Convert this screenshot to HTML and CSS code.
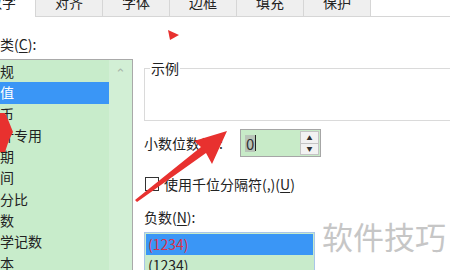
FILE: index.html
```html
<!DOCTYPE html>
<html lang="zh-CN">

<head>
    <meta charset="UTF-8">
    <meta name="viewport" content="width=device-width, initial-scale=1.0">
    <title>设置单元格格式-数字</title>
    <link rel="stylesheet" href="styles.css">
</head>

<body>
    <!--tab strip-->
    <div class="tabs">
        <div class="tab active">数字</div>
        <div class="tab">对齐</div>
        <div class="tab">字体</div>
        <div class="tab">边框</div>
        <div class="tab">填充</div>
        <div class="tab">保护</div>
    </div>

    <div class="main">
        <!--category list-->
        <div class="left">
            <div class="label">分类(<u>C</u>):</div>
            <div class="cat-box">
                <ul class="cat-list">
                    <li>常规</li>
                    <li class="selected">数值</li>
                    <li>货币</li>
                    <li>会计专用</li>
                    <li>日期</li>
                    <li>时间</li>
                    <li>百分比</li>
                    <li>分数</li>
                    <li>科学记数</li>
                    <li>文本</li>
                </ul>
                <div class="scroll"><span class="up">&#8963;</span></div>
            </div>
        </div>

        <!--options-->
        <div class="right">
            <fieldset class="sample">
                <legend>示例</legend>
                <div class="sample-body"></div>
            </fieldset>

            <div class="decimal-row">
                <span class="decimal-label">小数位数(<u>D</u>):</span>
                <div class="spin">
                    <div class="spin-value"><span class="sel">0</span><span class="caret"></span></div>
                    <div class="spin-btns">
                        <span>&#9650;</span>
                        <span>&#9660;</span>
                    </div>
                </div>
            </div>

            <label class="check-row">
                <span class="check"></span>使用千位分隔符(,)(<u>U</u>)
            </label>

            <div class="label neg-label">负数(<u>N</u>):</div>
            <ul class="neg-list">
                <li class="selected">(1234)</li>
                <li>(1234)</li>
            </ul>
        </div>
    </div>

    <!--watermark-->
    <div class="watermark">软件技巧</div>

    <!--red marks drawn over the screenshot-->
    <svg class="marks" width="450" height="270" viewBox="0 0 450 270">
        <polygon points="168,30 179,35 170,40" />
        <polygon points="0,113 5,113 9,122 13,132 9,140 5,152 0,152" />
        <polygon points="227,131 194,141 201,147 135,200 137,202 206,153 212,164" />
    </svg>
</body>

</html>
```

FILE: styles.css
```css
* {
    margin: 0;
    padding: 0;
    box-sizing: border-box;
}

html,
body {
    overflow: hidden;
}

body {
    position: relative;
    width: 450px;
    height: 270px;
    background: #fff;
    font-family: "Noto Sans CJK SC", "Noto Sans", sans-serif;
    font-size: 14px;
    color: #222;
}

ul {
    list-style: none;
}

u {
    text-decoration: underline;
    text-underline-offset: 2px;
}

/*tabs*/
.tabs {
    display: flex;
    height: 24px;
    margin-top: -7px;
    margin-left: -31px;
    border-bottom: 1px solid #d6d6d6;
}

.tab {
    width: 67px;
    height: 23px;
    line-height: 18px;
    text-align: center;
    background: #efefef;
    border-right: 1px solid #d6d6d6;
}

.tab.active {
    height: 24px;
    background: #fff;
}

/*layout*/
.main {
    display: flex;
}

.left {
    width: 150px;
    margin-left: -17px;
    flex-shrink: 0;
}

.label {
    height: 20px;
    line-height: 20px;
    padding-left: 3px;
    margin-top: 17px;
}

.cat-box {
    display: flex;
    height: 230px;
    margin-top: 5px;
    border: 1px solid #a9a9a9;
    background: #c8eccb;
}

.cat-list {
    flex: 1;
    padding-top: 1px;
}

.cat-list li {
    height: 21.3px;
    line-height: 21.3px;
    padding-left: 2px;
    white-space: nowrap;
}

.cat-list li.selected {
    background: #3a96f6;
    color: #fff;
}

.scroll {
    width: 23px;
    background: #d2efd5;
    text-align: center;
    color: #a9b7aa;
    font-size: 13px;
}

.scroll .up {
    display: block;
    margin-top: 3px;
}

.right {
    width: 330px;
    margin-left: 11px;
    flex-shrink: 0;
}

/*sample group*/
.sample {
    margin-top: 41px;
    padding: 0;
    border: 1px solid #dadada;
}

.sample legend {
    margin-left: 5px;
    padding: 0 1px;
    line-height: 20px;
}

.sample-body {
    height: 42px;
}

/*decimal places*/
.decimal-row {
    display: flex;
    align-items: center;
    margin-top: 8px;
}

.decimal-label {
    width: 96px;
}

.spin {
    display: flex;
    width: 81px;
    height: 28px;
    border: 1px solid #a6a6a6;
    background: #c8ebc8;
}

.spin-value {
    flex: 1;
    display: flex;
    align-items: center;
    padding-left: 4px;
    font-size: 15px;
}

.spin-value .sel {
    background: #b8c4b8;
    color: #333;
    line-height: 17px;
    padding: 0 1px;
}

.spin-value .caret {
    width: 1px;
    height: 16px;
    background: #222;
}

.spin-btns {
    display: flex;
    flex-direction: column;
    width: 19px;
    margin: 1px 1px 1px 0;
    border: 1px solid #c4c4c4;
    background: #f2f2f2;
}

.spin-btns span {
    flex: 1;
    display: flex;
    align-items: center;
    justify-content: center;
    font-size: 6px;
    color: #333;
}

.spin-btns span + span {
    border-top: 1px solid #c4c4c4;
}

/*thousands separator*/
.check-row {
    display: flex;
    align-items: center;
    height: 20px;
    margin-top: 17px;
    padding-left: 1px;
}

.check {
    width: 14px;
    height: 14px;
    margin-right: 5px;
    border: 1px solid #333;
    background: #fff;
}

/*negative numbers*/
.neg-label {
    padding-left: 0;
    margin-top: 13px;
}

.neg-list {
    width: 171px;
    height: 60px;
    margin-top: 5px;
    padding: 1px;
    border: 1px solid #a9c6e8;
    background: #c8ebcb;
}

.neg-list li {
    height: 21px;
    line-height: 21px;
    padding-left: 2px;
}

.neg-list li.selected {
    background: #3a96f6;
    color: #d8324a;
}

/*overlays*/
.watermark {
    position: absolute;
    left: 322px;
    top: 216px;
    font-size: 31px;
    line-height: 40px;
    color: #c6c6c6;
}

.marks {
    position: absolute;
    left: 0;
    top: 0;
    pointer-events: none;
}

.marks polygon {
    fill: #e8312f;
}
```
